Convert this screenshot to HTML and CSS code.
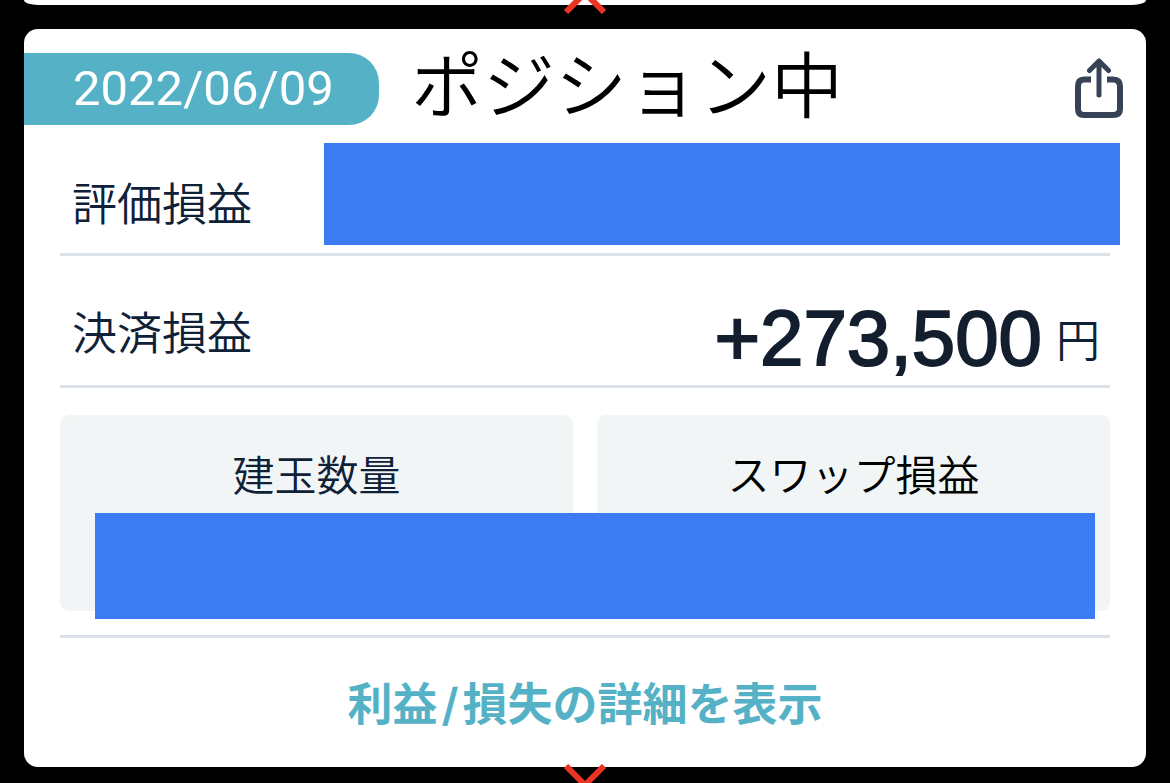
FILE: index.html
```html
<!DOCTYPE html>
<html lang="ja">
<head>
    <meta charset="UTF-8">
    <meta name="viewport" content="width=device-width, initial-scale=1.0">
    <title>ポジション中</title>
    <link rel="stylesheet" href="styles.css">
</head>
<body>
    <div class="page">
        <div class="prev-card"></div>
        <svg class="chevron chevron-top" viewBox="0 0 44 20" aria-hidden="true">
            <path d="M3 18 L22 -1 L41 18"/>
        </svg>

        <main class="card">
            <header class="card-header">
                <time class="date" datetime="2022-06-09">2022/06/09</time>
                <h1 class="title">ポジション中</h1>
                <button class="share" type="button" aria-label="共有">
                    <svg viewBox="0 0 50 62">
                        <path d="M17 21.5 H10 Q4 21.5 4 28.5 V51 Q4 57 10 57 H39 Q46 57 46 51 V28.5 Q46 21.5 39 21.5 H33" stroke-width="6"/>
                        <path d="M25 37 V4 M15.5 12.5 L25 3 L34.5 12.5" stroke-width="5" stroke-linecap="round" stroke-linejoin="round"/>
                    </svg>
                </button>
            </header>

            <section class="row row-valuation">
                <span class="label">評価損益</span>
                <span class="mask"></span>
            </section>

            <section class="row row-settled">
                <span class="label">決済損益</span>
                <span class="amount"><strong class="number">+273,500</strong><span class="unit">円</span></span>
            </section>

            <section class="tiles">
                <div class="tile">建玉数量</div>
                <div class="tile tile-dark">スワップ損益</div>
                <span class="tiles-mask"></span>
            </section>

            <a class="details" href="#">利益<span class="slash">/</span>損失の詳細を表示</a>
        </main>

        <svg class="chevron chevron-bottom" viewBox="0 0 44 20" aria-hidden="true">
            <path d="M3 2 L22 21 L41 2"/>
        </svg>
    </div>
</body>
</html>
```

FILE: styles.css
```css
* {
    box-sizing: border-box;
}
body {
    margin: 0;
    background: #000;
    color: #0f2136;
    font-family: "Noto Sans CJK JP", sans-serif;
    font-weight: 350;
}
.page {
    position: relative;
    padding: 0 24px 16px;
    overflow: hidden;
}
.prev-card {
    height: 5px;
    margin-bottom: 24px;
    background: #fff;
    border-radius: 0 0 14px 14px / 0 0 5px 5px;
}
.chevron {
    position: absolute;
    left: 50%;
    width: 44px;
    height: 20px;
    margin-left: -22px;
    fill: none;
    stroke: #ea3323;
    stroke-width: 6;
}
.chevron-top {
    top: -6px;
}
.chevron-bottom {
    bottom: -1px;
}
.card {
    background: #fff;
    border-radius: 14px;
    overflow: hidden;
}
.card-header {
    display: flex;
    align-items: flex-start;
    height: 114px;
    padding-right: 22px;
}
.date {
    width: 355px;
    margin-top: 24px;
    padding-left: 49px;
    border-radius: 0 30px 30px 0;
    background: #55b2c6;
    color: #fff;
    font-family: Roboto, sans-serif;
    font-size: 49px;
    font-weight: 400;
    line-height: 72px;
}
.title {
    margin: 0 0 0 32px;
    color: #000;
    font-size: 72px;
    font-weight: 350;
    line-height: 104px;
}
.share {
    width: 50px;
    height: 62px;
    margin: 29px 0 0 auto;
    padding: 0;
    border: 0;
    background: none;
    cursor: pointer;
}
.share svg {
    display: block;
    fill: none;
    stroke: #384256;
}
.row {
    display: flex;
    margin: 0 36px;
    padding-left: 12px;
    border-bottom: 3px solid #dce1e9;
}
.label {
    font-size: 45px;
    line-height: 64px;
}
.row-valuation {
    align-items: center;
    gap: 72px;
    padding-bottom: 8px;
}
.row-valuation .label {
    padding-top: 16px;
}
.mask {
    flex: 1;
    height: 102px;
    margin-right: -10px;
    background: #3b7cf2;
}
.row-settled {
    align-items: center;
    justify-content: space-between;
    height: 132px;
    padding-right: 10px;
    padding-top: 20px;
}
.amount {
    display: flex;
    align-items: center;
    gap: 14px;
    padding-top: 14px;
    line-height: 84px;
}
.number {
    color: #131f2e;
    font-family: "Liberation Sans", Arial, sans-serif;
    font-size: 78px;
    font-weight: 400;
    -webkit-text-stroke: 2px #131f2e;
}
.unit {
    font-size: 44px;
}
.tiles {
    position: relative;
    display: grid;
    grid-template-columns: 1fr 1fr;
    gap: 24px;
    margin: 27px 36px 0;
    padding-bottom: 24px;
    border-bottom: 3px solid #dce1e9;
}
.tile {
    height: 196px;
    padding-top: 26px;
    border-radius: 9px;
    background: #f2f5f6;
    font-size: 42px;
    line-height: 64px;
    text-align: center;
}
.tile-dark {
    color: #000;
}
.tiles-mask {
    position: absolute;
    top: 98px;
    left: 35px;
    right: 15px;
    height: 106px;
    background: #3b7cf2;
}
.details {
    display: block;
    padding: 32px 0 33px;
    color: #55b2c6;
    font-size: 45px;
    font-weight: 700;
    line-height: 64px;
    text-align: center;
    text-decoration: none;
}
.slash {
    padding: 0 4px;
    font-family: Inter, sans-serif;
    font-weight: 600;
    line-height: 1;
}
```
